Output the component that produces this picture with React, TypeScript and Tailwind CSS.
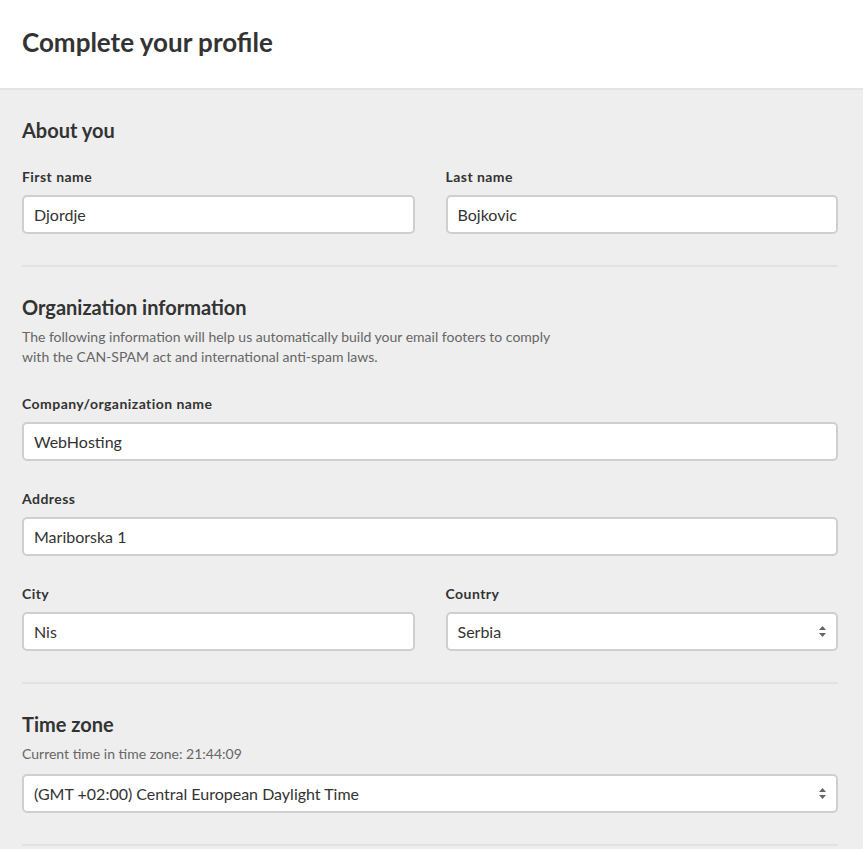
import React from 'react';

const font = { fontFamily: 'Lato, "Open Sans", sans-serif' };

const Label = ({ children }: { children: React.ReactNode }) => (
    <label className="block text-[14px] leading-[18px] font-bold tracking-[0.45px] text-[#333333] mb-[9px]">{children}</label>
);

const TextInput = ({ value }: { value: string }) => (
    <div className="h-[39px] bg-white border-2 border-[#cfcfcf] rounded-[5px] px-[10px] flex items-center text-[16px] text-[#333333]">
        {value}
    </div>
);

const SelectBox = ({ value }: { value: string }) => (
    <div className="h-[39px] bg-white border-2 border-[#cfcfcf] rounded-[5px] pl-[10px] pr-[9px] flex items-center justify-between text-[16px] text-[#333333]">
        <span>{value}</span>
        <svg width="9" height="13" viewBox="0 0 9 13" className="text-[#666666]">
            <path d="M4.5 1 L8 5 L1 5 Z" fill="currentColor" />
            <path d="M1 8 L8 8 L4.5 12 Z" fill="currentColor" />
        </svg>
    </div>
);

const Divider = () => <div className="border-t-2 border-[#e2e2e2] mt-[31px]" />;

export default function App() {
    return (
        <div style={font} className="min-h-screen bg-[#eeeeee]">
            <header className="bg-white h-[90px] border-b-2 border-[#e3e3e3] px-[22px] flex items-center">
                <h1 className="text-[26px] font-bold text-[#333333] -mt-[4px]">Complete your profile</h1>
            </header>

            <main className="pl-[22px] pr-[25px] pt-[28px] pb-[20px]">
                {/* About you */}
                <h2 className="text-[20px] leading-6 font-bold text-[#333333]">About you</h2>
                <div className="grid grid-cols-2 gap-x-[31px] mt-[26px]">
                    <div>
                        <Label>First name</Label>
                        <TextInput value="Djordje" />
                    </div>
                    <div>
                        <Label>Last name</Label>
                        <TextInput value="Bojkovic" />
                    </div>
                </div>
                <Divider />

                {/* Organization */}
                <h2 className="text-[20px] leading-6 font-bold text-[#333333] mt-[28px]">Organization information</h2>
                <p className="text-[14px] leading-5 text-[#666666] mt-[8px] max-w-[535px]">
                    The following information will help us automatically build your email footers to comply with the CAN-SPAM act and international anti-spam laws.
                </p>
                <div className="mt-[28px]">
                    <Label>Company/organization name</Label>
                    <TextInput value="WebHosting" />
                </div>
                <div className="mt-[29px]">
                    <Label>Address</Label>
                    <TextInput value="Mariborska 1" />
                </div>
                <div className="grid grid-cols-2 gap-x-[31px] mt-[29px]">
                    <div>
                        <Label>City</Label>
                        <TextInput value="Nis" />
                    </div>
                    <div>
                        <Label>Country</Label>
                        <SelectBox value="Serbia" />
                    </div>
                </div>
                <Divider />

                {/* Time zone */}
                <h2 className="text-[20px] leading-6 font-bold text-[#333333] mt-[28px]">Time zone</h2>
                <p className="text-[14px] leading-5 text-[#666666] mt-[8px]">Current time in time zone: 21:44:09</p>
                <div className="mt-[10px]">
                    <SelectBox value="(GMT +02:00) Central European Daylight Time" />
                </div>
                <Divider />
            </main>
        </div>
    );
}
